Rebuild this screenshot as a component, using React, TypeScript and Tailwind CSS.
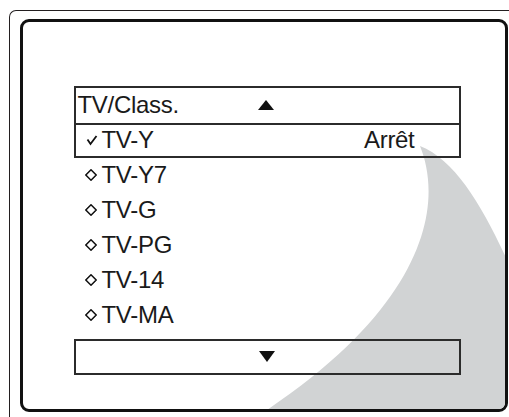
const ratings = ["TV-Y7", "TV-G", "TV-PG", "TV-14", "TV-MA"];

const Diamond = () => (
  <svg width="12" height="12" viewBox="0 0 12 12" className="shrink-0">
    <polygon points="6,0.8 11.2,6 6,11.2 0.8,6" fill="white" stroke="#111" strokeWidth="1.5" />
  </svg>
);

const Check = () => (
  <svg width="12" height="12" viewBox="0 0 12 12" className="shrink-0">
    <polyline points="1.5,5.5 4.5,10 10.5,2" fill="none" stroke="#111" strokeWidth="1.8" />
  </svg>
);

const App = () => {
  return (
    <div
      className="w-[509px] h-[417px] overflow-hidden bg-white pl-[9px] pt-[10px] text-[#1a1a1a]"
      style={{ fontFamily: '"Liberation Sans", Arial, sans-serif' }}
    >
      <div className="w-[530px] h-[430px] border-l-[1.5px] border-t-[1.5px] border-[#231f20] rounded-tl-[7px] pl-[9.5px] pt-[7.5px]">
        <div className="relative w-[488px] h-[393px] border-[3px] border-[#111] rounded-[9px] overflow-hidden">
          <svg
            className="absolute left-0 top-0"
            width="482"
            height="387"
            viewBox="23 22 482 387"
          >
            <path
              d="M 420 146 C 442 200, 432 300, 264 412 L 508 412 L 508 262 C 482 205, 455 160, 420 146 Z"
              fill="#d1d3d4"
            />
          </svg>

          <div className="relative pl-[51px] pt-[64px] w-[438px]">
            <div className="border-2 border-[#2b2b2b]">
              <div className="h-[35px] flex items-center pl-[2px] text-[24px] leading-none tracking-[-0.3px]">
                <span>TV/Class.</span>
                <svg width="16" height="10" viewBox="0 0 16 10" className="ml-[79px]">
                  <polygon points="8,0 16,10 0,10" fill="#111" />
                </svg>
              </div>
              <div className="h-[33px] border-t-2 border-[#2b2b2b] flex items-center pl-[10px] pr-[44px] text-[24px] leading-none tracking-[-0.3px]">
                <Check />
                <span className="ml-[4px]">TV-Y</span>
                <span className="ml-auto">Arrêt</span>
              </div>
            </div>

            {ratings.map((r) => (
              <div key={r} className="h-[35px] flex items-center pl-[11px] text-[24px] leading-none tracking-[-0.3px]">
                <Diamond />
                <span className="ml-[5px]">{r}</span>
              </div>
            ))}

            <div className="mt-[6px] h-[36px] border-2 border-[#2b2b2b] flex items-center justify-center">
              <svg width="16" height="11" viewBox="0 0 16 11">
                <polygon points="0,0 16,0 8,11" fill="#111" />
              </svg>
            </div>
          </div>
        </div>
      </div>
    </div>
  );
};

export default App;
